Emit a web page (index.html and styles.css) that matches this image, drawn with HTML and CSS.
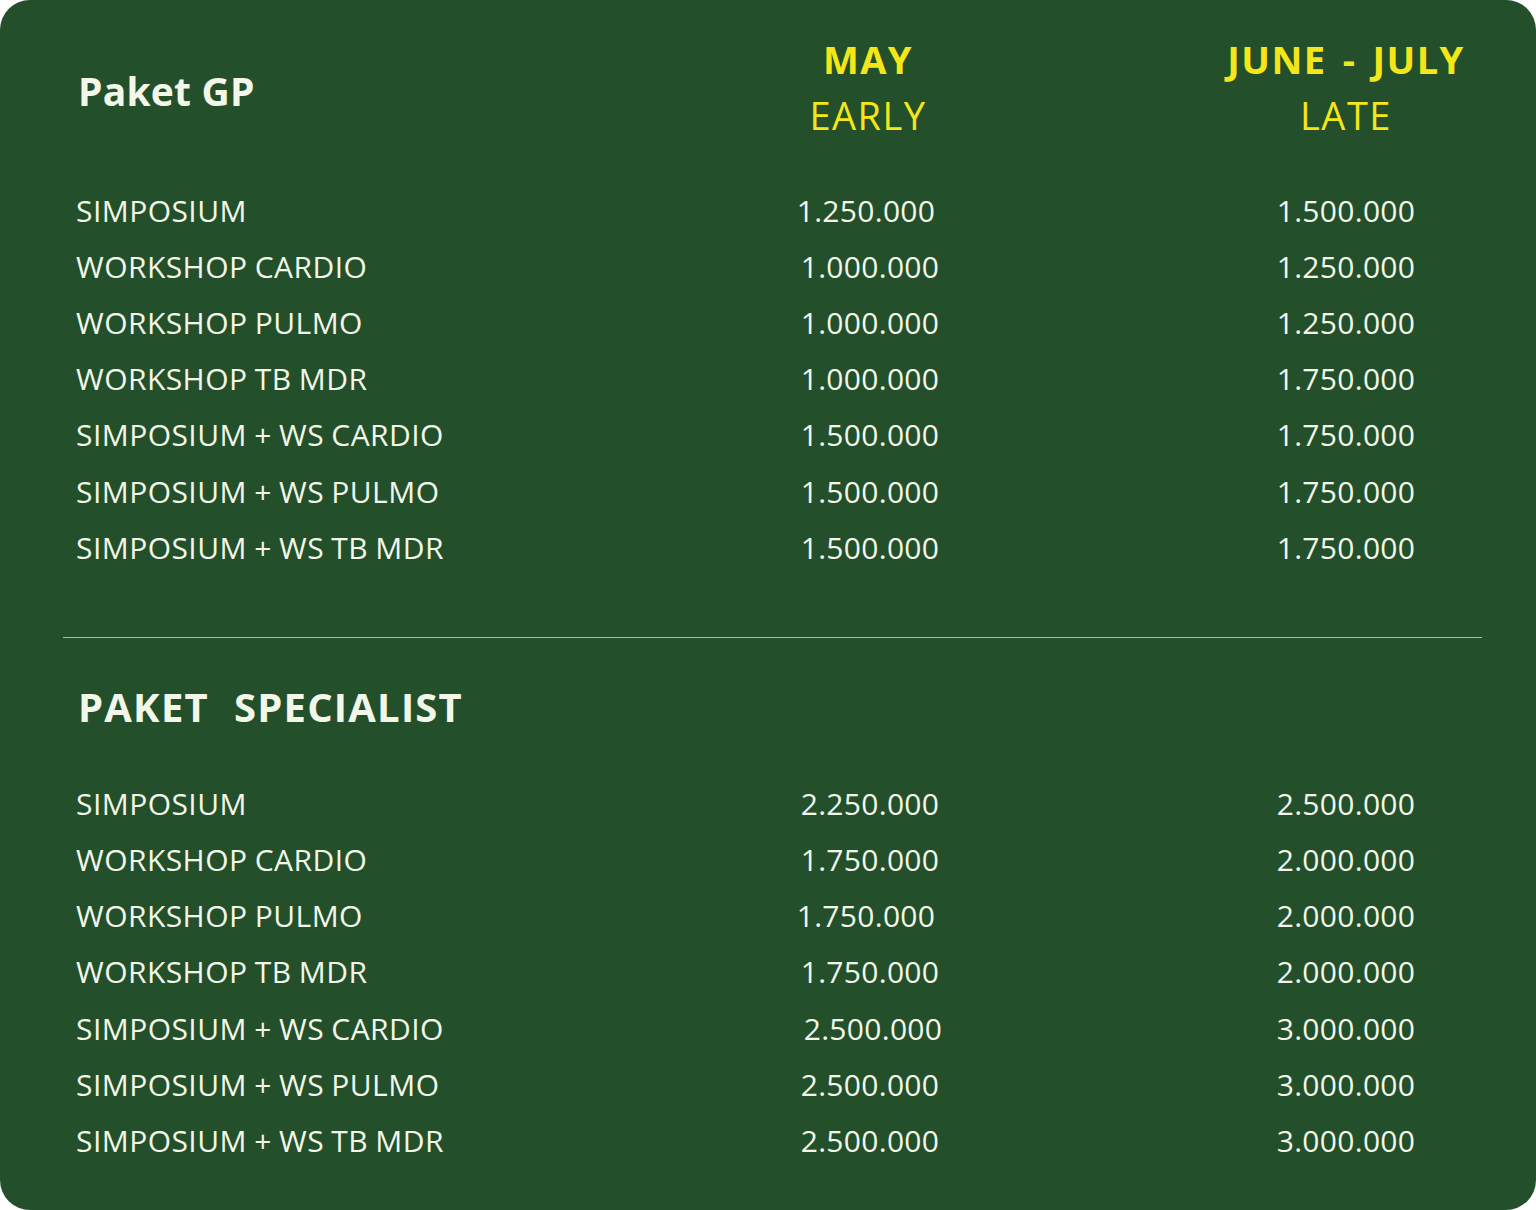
FILE: index.html
```html
<!DOCTYPE html>
<html lang="id">
<head>
<meta charset="utf-8">
<title>Paket</title>
<link rel="stylesheet" href="styles.css">
</head>
<body>
<div class="card">
  <section class="block">
    <div class="head">
      <div class="title">Paket GP</div>
      <div class="period early-col"><span class="mon">MAY</span><span class="phase">EARLY</span></div>
      <div class="period late-col"><span class="mon">JUNE - JULY</span><span class="phase">LATE</span></div>
    </div>
    <div class="rows">
      <div class="row"><span class="lbl">SIMPOSIUM</span><span class="num early-col sl">1.250.000</span><span class="num late-col">1.500.000</span></div>
      <div class="row"><span class="lbl">WORKSHOP CARDIO</span><span class="num early-col">1.000.000</span><span class="num late-col">1.250.000</span></div>
      <div class="row"><span class="lbl">WORKSHOP PULMO</span><span class="num early-col">1.000.000</span><span class="num late-col">1.250.000</span></div>
      <div class="row"><span class="lbl">WORKSHOP TB MDR</span><span class="num early-col">1.000.000</span><span class="num late-col">1.750.000</span></div>
      <div class="row"><span class="lbl">SIMPOSIUM + WS CARDIO</span><span class="num early-col">1.500.000</span><span class="num late-col">1.750.000</span></div>
      <div class="row"><span class="lbl">SIMPOSIUM + WS PULMO</span><span class="num early-col">1.500.000</span><span class="num late-col">1.750.000</span></div>
      <div class="row"><span class="lbl">SIMPOSIUM + WS TB MDR</span><span class="num early-col">1.500.000</span><span class="num late-col">1.750.000</span></div>
    </div>
  </section>
  <hr class="divider">
  <section class="block">
    <div class="head head2">
      <div class="title title2">PAKET&nbsp;&nbsp;SPECIALIST</div>
    </div>
    <div class="rows">
      <div class="row"><span class="lbl">SIMPOSIUM</span><span class="num early-col">2.250.000</span><span class="num late-col">2.500.000</span></div>
      <div class="row"><span class="lbl">WORKSHOP CARDIO</span><span class="num early-col">1.750.000</span><span class="num late-col">2.000.000</span></div>
      <div class="row"><span class="lbl">WORKSHOP PULMO</span><span class="num early-col sl">1.750.000</span><span class="num late-col">2.000.000</span></div>
      <div class="row"><span class="lbl">WORKSHOP TB MDR</span><span class="num early-col">1.750.000</span><span class="num late-col">2.000.000</span></div>
      <div class="row"><span class="lbl">SIMPOSIUM + WS CARDIO</span><span class="num early-col sr">2.500.000</span><span class="num late-col">3.000.000</span></div>
      <div class="row"><span class="lbl">SIMPOSIUM + WS PULMO</span><span class="num early-col">2.500.000</span><span class="num late-col">3.000.000</span></div>
      <div class="row"><span class="lbl">SIMPOSIUM + WS TB MDR</span><span class="num early-col">2.500.000</span><span class="num late-col">3.000.000</span></div>
    </div>
  </section>
</div>
</body>
</html>
```
FILE: styles.css
```css
* { box-sizing: border-box; }
html, body { margin: 0; padding: 0; background: #ffffff; }
body {
  font-family: "Open Sans", "DejaVu Sans", sans-serif;
  color: #f2f7ea;
}
.card {
  width: 1536px;
  height: 1210px;
  background: #23502a;
  border-radius: 30px;
  padding: 0;
  overflow: hidden;
}
.block { padding-left: 76px; }
.head, .row {
  display: grid;
  grid-template-columns: 642px 300px 178px 300px;
  align-items: center;
}
.early-col { grid-column: 2; text-align: center; }
.late-col { grid-column: 4; text-align: center; }
.head { height: 182px; }
.title {
  font-weight: 700;
  font-size: 39px;
  letter-spacing: 0.2px;
  padding-left: 2px;
}
.period {
  display: flex;
  flex-direction: column;
  align-items: center;
  align-self: start;
  padding-top: 33px;
  color: #f4e619;
}
.mon { font-weight: 700; font-size: 38px; line-height: 52px; letter-spacing: 1.4px; word-spacing: 5px; }
.phase { font-weight: 400; font-size: 38px; line-height: 60px; letter-spacing: 1.5px; }
.head .title { align-self: start; padding-top: 63px; line-height: 56px; }
.rows { display: flex; flex-direction: column; }
.row { height: 56.2px; font-size: 30px; letter-spacing: 0.45px; word-spacing: -1px; }
.lbl { white-space: nowrap; }
.num { white-space: nowrap; letter-spacing: 0.3px; }
.num.early-col { padding-left: 4px; }
.num.early-col.sl { padding-left: 0; padding-right: 4px; }
.num.early-col.sr { padding-left: 10px; }
.divider {
  margin: 62px 0 0 63px;
  width: 1419px;
  border: 0;
  border-top: 1px solid #a9bfa5;
  height: 0;
}
.head2 { height: 137px; }
.head .title2 { padding-top: 41px; font-size: 40px; letter-spacing: 1.2px; word-spacing: 1px; }
```
